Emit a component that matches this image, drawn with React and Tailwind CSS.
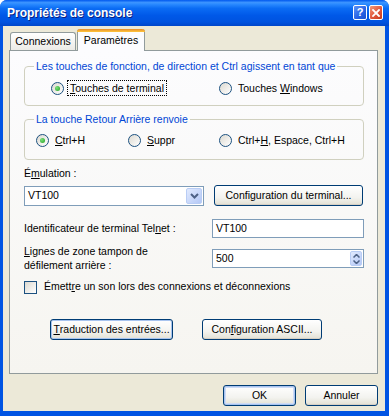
import React from "react";

const font = { fontFamily: '"Liberation Sans", Arial, sans-serif' };

function Radio({ checked }) {
    return (
        <span className="w-[13px] h-[13px] shrink-0 rounded-full border border-[#1c5180] bg-[linear-gradient(135deg,#dcd9d0,#ffffff)] flex items-center justify-center">
            {checked && (
                <span className="w-[5px] h-[5px] rounded-full bg-[radial-gradient(circle_at_35%_35%,#7be07b,#21a121)]" />
            )}
        </span>
    );
}

function RadioItem({ checked, children, focus }) {
    return (
        <div className="flex items-center h-[14px]">
            <Radio checked={checked} />
            <span
                className={`ml-[4px] px-[2px] leading-[14px] ${
                    focus ? "outline outline-1 outline-dotted outline-black" : ""
                }`}
            >
                {children}
            </span>
        </div>
    );
}

function XpButton({ children, className = "" }) {
    return (
        <div
            className={`h-[21px] rounded-[3px] border border-[#003c74] bg-[linear-gradient(to_bottom,#ffffff,#f3f3ef_60%,#e3e0d4)] flex items-center justify-center shadow-[inset_0_-1px_0_#d6d0c5] ${className}`}
        >
            {children}
        </div>
    );
}

function GroupBox({ title, children, className = "" }) {
    return (
        <fieldset
            className={`border border-[#d0d0bf] rounded-[4px] ${className}`}
        >
            <legend className="ml-[9px] px-[2px] leading-[13px] text-[#0046d5]">
                {title}
            </legend>
            {children}
        </fieldset>
    );
}

export default function App() {
    return (
        <div
            className="w-[389px] h-[416px] flex flex-col bg-[#0054e3] rounded-t-[7px] overflow-hidden text-[10.5px] text-black"
            style={font}
        >
            {/* Title bar */}
            <div className="h-[26px] shrink-0 flex items-center pl-[7px] pr-[6px] bg-[linear-gradient(to_bottom,#0058ee_0%,#3d95ff_10%,#2a8aff_16%,#0b6cf4_32%,#0058e8_60%,#0053df_85%,#0046c9_100%)]">
                <span className="text-white font-bold text-[12px] leading-none [text-shadow:1px_1px_0_#0a1e80]">
                    Propriétés de console
                </span>
                <div className="ml-auto flex gap-[2px] items-center mt-[-1px]">
                    <div className="w-[14px] h-[15px] rounded-[2px] border border-white bg-[linear-gradient(135deg,#5d93f8,#2762e4_60%,#1d4fd0)] flex items-center justify-center text-white font-bold text-[11px] leading-none">
                        ?
                    </div>
                    <div className="w-[14px] h-[15px] rounded-[2px] border border-white bg-[linear-gradient(135deg,#f29a79,#e0553b_55%,#c43a1a)] flex items-center justify-center">
                        <svg width="8" height="8" viewBox="0 0 8 8">
                            <path
                                d="M1 1L7 7M7 1L1 7"
                                stroke="white"
                                strokeWidth="1.8"
                                strokeLinecap="square"
                            />
                        </svg>
                    </div>
                </div>
            </div>

            {/* Client area */}
            <div className="flex-1 ml-[3px] mr-[4px] mb-[5px] bg-[#ece9d8] pt-[2px] pl-[6px] pr-[7px] flex flex-col">
                {/* Tabs */}
                <div className="flex items-end pl-[1px] h-[22px]">
                    <div className="w-[66px] h-[18px] border border-b-0 border-[#919b9c] rounded-t-[3px] bg-[linear-gradient(to_bottom,#ffffff,#ecebe6)] flex items-center justify-center">
                        Connexions
                    </div>
                    <div className="relative z-10 w-[68px] h-[22px] mb-[-1px] ml-[1px] border-x border-[#919b9c] rounded-t-[3px] bg-[#fcfcfe] flex flex-col">
                        <div className="h-[3px] rounded-t-[3px] bg-[linear-gradient(to_bottom,#e68b2c,#ffc73c)] mx-[-1px]" />
                        <div className="flex-1 flex items-center justify-center pb-[1px]">
                            Paramètres
                        </div>
                    </div>
                </div>

                {/* Panel */}
                <div className="h-[324px] border border-[#919b9c] bg-[linear-gradient(to_bottom,#fcfcfe,#f6f5f0)] pl-[14px] pr-[13px] pt-[9px] flex flex-col">
                    <GroupBox title="Les touches de fonction, de direction et Ctrl agissent en tant que">
                        <div className="flex pt-[8px] pb-[10px] pl-[26px]">
                            <div className="w-[168px]">
                                <RadioItem checked focus>
                                    <u>T</u>ouches de terminal
                                </RadioItem>
                            </div>
                            <RadioItem>
                                Touches <u>W</u>indows
                            </RadioItem>
                        </div>
                    </GroupBox>

                    <GroupBox title="La touche Retour Arrière renvoie" className="mt-[7px]">
                        <div className="flex pt-[7px] pb-[12px] pl-[11px]">
                            <div className="w-[92px]">
                                <RadioItem checked>
                                    <u>C</u>trl+H
                                </RadioItem>
                            </div>
                            <div className="w-[91px]">
                                <RadioItem>
                                    <u>S</u>uppr
                                </RadioItem>
                            </div>
                            <RadioItem>
                                Ctrl+<u>H</u>, Espace, Ctrl+H
                            </RadioItem>
                        </div>
                    </GroupBox>

                    <div className="mt-[7px] leading-[13px]">
                        É<u>m</u>ulation :
                    </div>

                    <div className="mt-[5px] flex items-center">
                        <div className="w-[180px] h-[20px] border border-[#7f9db9] bg-white flex items-center pl-[3px]">
                            <span>VT100</span>
                            <div className="ml-auto mr-[1px] w-[16px] h-[16px] rounded-[2px] border border-[#b9cdf5] bg-[linear-gradient(135deg,#e1eafe,#b4c8f6)] flex items-center justify-center">
                                <svg width="9" height="6" viewBox="0 0 9 6">
                                    <path
                                        d="M1 1L4.5 4.5L8 1"
                                        fill="none"
                                        stroke="#4d6185"
                                        strokeWidth="2"
                                    />
                                </svg>
                            </div>
                        </div>
                        <XpButton className="ml-[10px] w-[149px]">
                            Confi<u>g</u>uration du terminal...
                        </XpButton>
                    </div>

                    <div className="mt-[13px] flex items-center h-[19px]">
                        <span className="w-[188px]">
                            Identificateur de terminal Tel<u>n</u>et :
                        </span>
                        <div className="w-[152px] h-[19px] border border-[#7f9db9] bg-white flex items-center pl-[3px]">
                            VT100
                        </div>
                    </div>

                    <div className="mt-[7px] flex items-center">
                        <span className="w-[188px] leading-[13.5px]">
                            <u>L</u>ignes de zone tampon de
                            <br />
                            défilement arrière :
                        </span>
                        <div className="w-[152px] h-[19px] border border-[#7f9db9] bg-white flex items-center pl-[3px]">
                            <span>500</span>
                            <div className="ml-auto mr-[1px] w-[12px] h-[15px] rounded-[2px] border border-[#b9cdf5] bg-[linear-gradient(135deg,#e1eafe,#b4c8f6)] flex flex-col items-center justify-center gap-[2px]">
                                <svg width="7" height="4" viewBox="0 0 7 4">
                                    <path d="M0.5 3.5L3.5 0.5L6.5 3.5" fill="none" stroke="#4d6185" strokeWidth="1.5" />
                                </svg>
                                <svg width="7" height="4" viewBox="0 0 7 4">
                                    <path d="M0.5 0.5L3.5 3.5L6.5 0.5" fill="none" stroke="#4d6185" strokeWidth="1.5" />
                                </svg>
                            </div>
                        </div>
                    </div>

                    <div className="mt-[8px] flex items-center h-[14px]">
                        <span className="w-[13px] h-[13px] border border-[#1c5180] bg-[linear-gradient(135deg,#dcd9d0,#ffffff)]" />
                        <span className="ml-[7px]">
                            Émett<u>r</u>e un son lors des connexions et déconnexions
                        </span>
                    </div>

                    <div className="mt-[25px] flex pl-[26px] gap-[29px]">
                        <XpButton className="w-[123px] shadow-[inset_0_0_0_1px_#a8c4ef]">
                            <u>T</u>raduction des entrées...
                        </XpButton>
                        <XpButton className="w-[120px]">
                            Con<u>f</u>iguration ASCII...
                        </XpButton>
                    </div>
                </div>

                {/* Dialog buttons */}
                <div className="mt-[11px] flex justify-end gap-[9px]">
                    <XpButton className="w-[73px] shadow-[inset_0_0_0_1px_#a8c4ef,inset_0_0_0_2px_#cedbf5]">
                        OK
                    </XpButton>
                    <XpButton className="w-[73px]">Annuler</XpButton>
                </div>
            </div>
        </div>
    );
}
